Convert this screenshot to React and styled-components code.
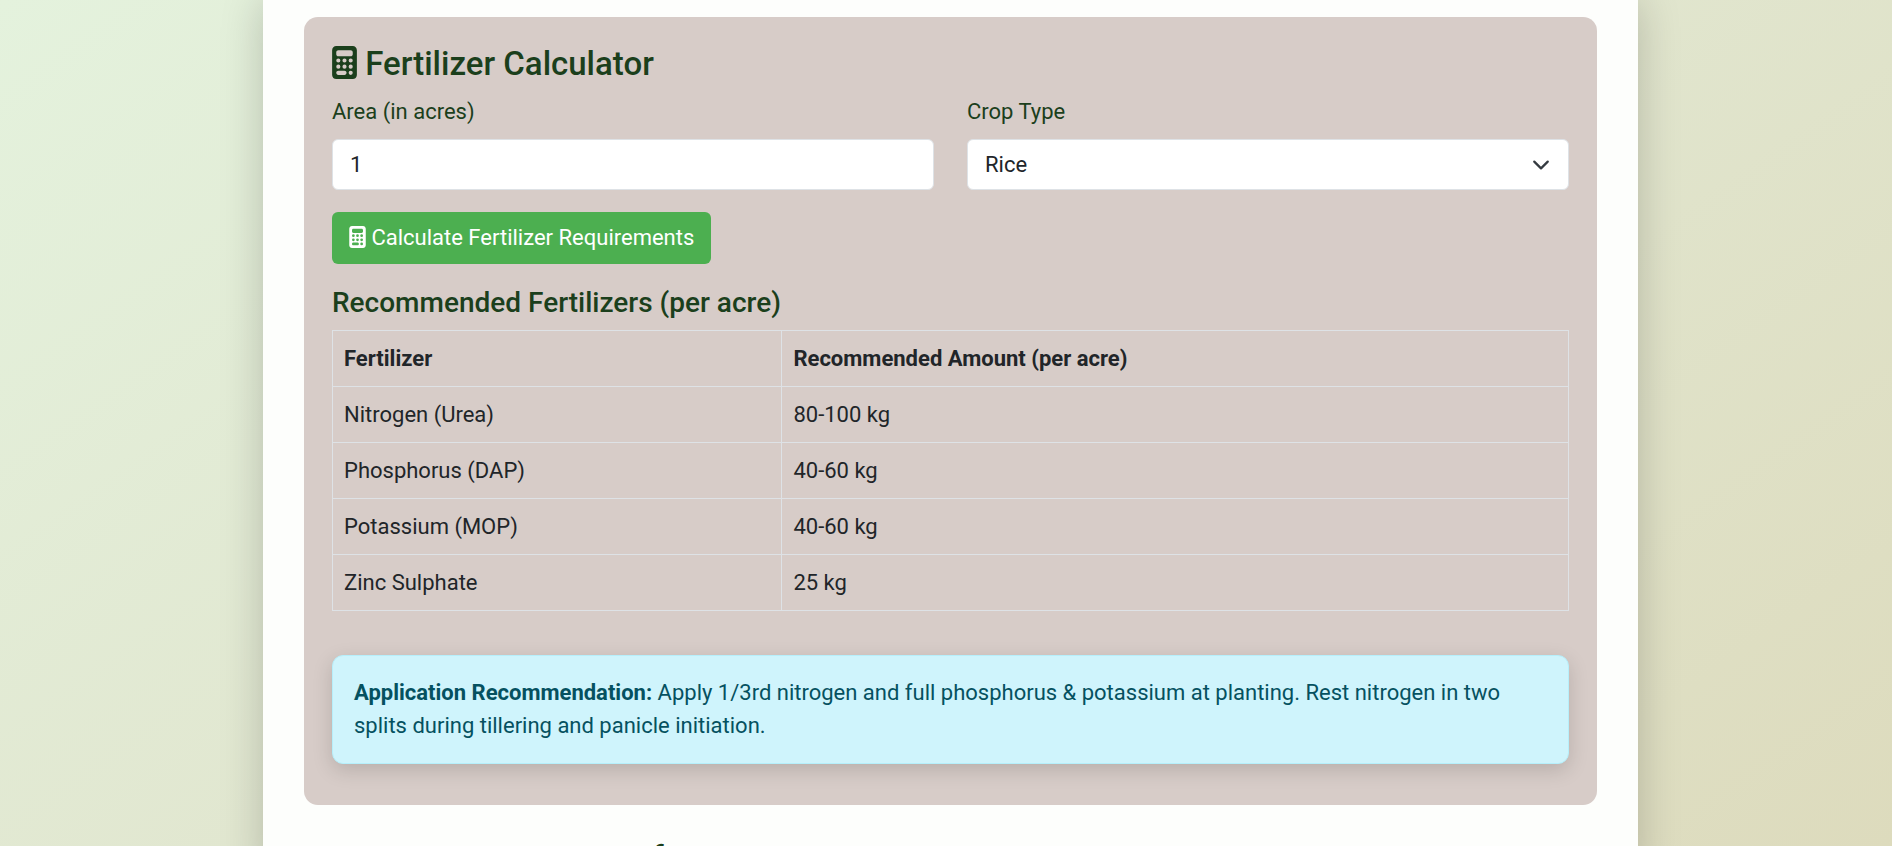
import React, { useState } from "react";
import styled, { createGlobalStyle } from "styled-components";
import { FaCalculator } from "react-icons/fa6";

const GlobalStyle = createGlobalStyle`
  *, *::before, *::after { box-sizing: border-box; }
  html { scrollbar-width: none; }
  body {
    margin: 0;
    padding-left: 9px;
    min-height: 100vh;
    font-family: Roboto, "Liberation Sans", sans-serif;
    font-size: 22px;
    line-height: 33px;
    color: #212529;
    background: linear-gradient(145deg, #e4f2dd 0%, #e1e6cf 50%, #dddbbd 100%) no-repeat fixed;
  }
`;

const Page = styled.main`
  width: 100%;
  max-width: 1375px;
  min-height: 100vh;
  margin: 0 auto;
  padding: 17px 41px 0;
  background: #fdfefc;
  box-shadow: 0 0 41px rgba(0, 0, 0, 0.2);
`;

const Card = styled.section`
  padding: 27px 28px;
  border-radius: 14px;
  background: #d7ccc8;
`;

const SectionTitle = styled.h3`
  margin: 0 0 11px;
  font-size: 33px;
  line-height: 40px;
  font-weight: 500;
  color: #1b3f1c;
`;

const CalculatorIcon = styled(FaCalculator).attrs({ "aria-hidden": true })`
  width: ${(p) => (p.$large ? 25 : 17)}px;
  height: ${(p) => (p.$large ? 33 : 22)}px;
  vertical-align: -0.125em;
`;

const Fields = styled.div`
  display: grid;
  grid-template-columns: 1fr 1fr;
  gap: 33px;
`;

const Field = styled.div`
  display: flex;
  flex-direction: column;
  gap: 11px;
`;

const Label = styled.label`
  color: #1b3f1c;
`;

const Input = styled.input`
  width: 100%;
  height: 51px;
  padding: 8px 17px;
  border: 1px solid #dee2e6;
  border-radius: 6px;
  background: #fff;
  color: #212529;
  font: inherit;
`;

const SelectWrap = styled.div`
  position: relative;
`;

const Select = styled(Input).attrs({ as: "select" })`
  appearance: none;
`;

const Chevron = styled.svg`
  position: absolute;
  top: 17px;
  right: 19px;
  width: 18px;
  height: 18px;
  pointer-events: none;
`;

const Button = styled.button`
  display: block;
  margin: 22px 0;
  padding: 9px 17px 10px;
  border: 0;
  border-radius: 6px;
  background: #4caf50;
  color: #fff;
  font: inherit;
`;

const TableTitle = styled.h4`
  margin: 0 0 11px;
  font-size: 28px;
  line-height: 33px;
  font-weight: 500;
  color: #1b3f1c;
`;

const Table = styled.table`
  width: 100%;
  border-collapse: collapse;
  text-align: left;
`;

const Cell = styled.td`
  height: 56px;
  padding: 11px;
  border: 1px solid #dee2e6;
`;

const Notice = styled.p`
  margin: 44px 0 14px;
  padding: 20px 21px 21px;
  border: 1px solid #b6effb;
  border-radius: 11px;
  background: #cff4fc;
  color: #055160;
  box-shadow: 0 6px 20px rgba(0, 0, 0, 0.15);
`;

const NextTitle = styled(SectionTitle)`
  margin-top: 33px;
  padding-left: 348px;
`;

const amounts = [
  ["Nitrogen (Urea)", "80-100 kg"],
  ["Phosphorus (DAP)", "40-60 kg"],
  ["Potassium (MOP)", "40-60 kg"],
  ["Zinc Sulphate", "25 kg"],
];

export default function App() {
  const [area, setArea] = useState("1");
  return (
    <>
      <GlobalStyle />
      <Page>
        <Card>
          <SectionTitle>
            <CalculatorIcon $large /> Fertilizer Calculator
          </SectionTitle>
          <Fields>
            <Field>
              <Label htmlFor="area">Area (in acres)</Label>
              <Input id="area" inputMode="numeric" value={area} onChange={(e) => setArea(e.target.value)} />
            </Field>
            <Field>
              <Label htmlFor="crop">Crop Type</Label>
              <SelectWrap>
                <Select id="crop" defaultValue="Rice">
                  <option>Rice</option>
                </Select>
                <Chevron viewBox="0 0 16 16" aria-hidden="true">
                  <path
                    d="m2 5 6 6 6-6"
                    fill="none"
                    stroke="#343a40"
                    strokeWidth="2"
                    strokeLinecap="round"
                    strokeLinejoin="round"
                  />
                </Chevron>
              </SelectWrap>
            </Field>
          </Fields>
          <Button type="button">
            <CalculatorIcon /> Calculate Fertilizer Requirements
          </Button>
          <TableTitle>Recommended Fertilizers (per acre)</TableTitle>
          <Table>
            <thead>
              <tr>
                <Cell as="th" scope="col">Fertilizer</Cell>
                <Cell as="th" scope="col">Recommended Amount (per acre)</Cell>
              </tr>
            </thead>
            <tbody>
              {amounts.map(([name, amount]) => (
                <tr key={name}>
                  <Cell>{name}</Cell>
                  <Cell>{amount}</Cell>
                </tr>
              ))}
            </tbody>
          </Table>
          <Notice>
            <strong>Application Recommendation:</strong> Apply 1/3rd nitrogen and full phosphorus &amp; potassium at
            planting. Rest nitrogen in two splits during tillering and panicle initiation.
          </Notice>
        </Card>
        <NextTitle>f</NextTitle>
      </Page>
    </>
  );
}
